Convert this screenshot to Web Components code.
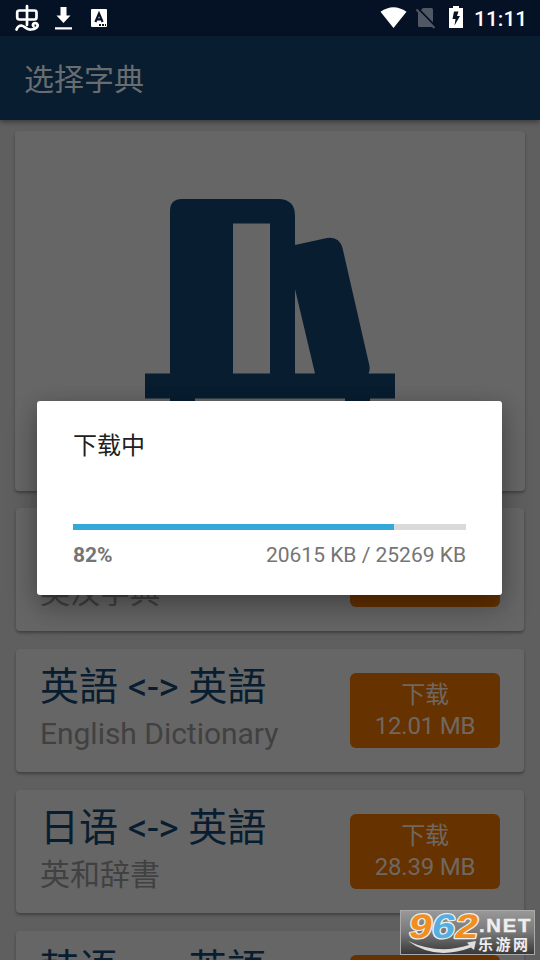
<!DOCTYPE html>
<html lang="zh-CN">
<head>
<meta charset="utf-8">
<title>选择字典</title>
<style>
html,body{margin:0;height:960px;overflow:hidden;background:#5f5f5f}
body{font-family:Roboto,"Noto Sans CJK SC",sans-serif}
</style>
</head>
<body>
<dict-app></dict-app>
<script>
const define = (name, html) => {
  const t = document.createElement('template');
  t.innerHTML = html;
  customElements.define(name, class extends HTMLElement {
    constructor() {
      super();
      this.attachShadow({mode: 'open'}).append(t.content.cloneNode(true));
    }
  });
};

define('status-bar', `
<style>
:host{display:flex;height:36px;box-sizing:border-box;background:#051124;color:#fff;align-items:center;justify-content:space-between;padding:0 13px 0 14px}
.g{display:flex;align-items:center}
svg{display:block}
.t{font-size:21px;line-height:36px;font-weight:500;width:53px;white-space:nowrap;margin-left:10px;padding-top:1px;height:35px}
</style>
<div class="g">
<svg width="110" height="36" viewBox="14 0 110 36">
<g fill="none" stroke="#fff" stroke-width="2.700" stroke-linecap="round" stroke-linejoin="round">
<path d="M27 6V25M19.500 10.500H34.500Q36.500 10.500 36.500 12.500V17Q36.500 19.500 34.500 19.500H19.500Q17.200 19.500 17.200 17V12.500Q17.200 10.500 19.500 10.500Z"/>
<path d="M16.500 29.500Q18 25.500 21.500 25.500C25 26 26 30 31 29.500C36 29.500 39 26 37 23.800C35 22 31.500 24 33.500 26.200"/></g>
<path d="M60.500 7H66.500V15.500H70.500L63.500 23L56.500 15.500H60.500Z M55 27.300H72V29.600H55Z" fill="#fff"/>
<rect x="91" y="9" width="16" height="18" rx="1" fill="#fff"/>
<path d="M95.400 22L99 13.500L102.600 22M96.900 19.300H101.100" fill="none" stroke="#051124" stroke-width="2.200"/>
<path d="M99 24H101V26H99ZM102 24H104V26H102ZM105 24H106V26H105Z" fill="#051124"/>
</svg></div>
<div class="g">
<svg width="84" height="36" viewBox="380 0 84 36">
<path d="M380.500 11.800Q393.500 2.500 406.500 11.800L393.500 28Z" fill="#fff"/>
<path d="M423 8H431.500Q433 8 433 9.500V25.500Q433 27 431.500 27H419.500Q418 27 418 25.500V13Z" fill="#505866"/>
<path d="M418 8.500L436 27" stroke="#051124" stroke-width="2"/>
<path d="M416.500 9.500L434.500 28" stroke="#505866" stroke-width="2"/>
<path d="M453 6H459V8H463V28H449V8H453Z" fill="#fff"/>
<path d="M454 11.500H458.500L457 16H460L454.500 25.500L455.500 19H452.500Z" fill="#051124"/>
</svg>
<div class="t"><slot></slot></div></div>`);

define('app-bar', `
<style>
:host{display:flex;height:84px;box-sizing:border-box;padding:0 0 3px 24px;align-items:center;background:#081d30;color:#696d70;font-size:30px;box-shadow:0 2px 5px rgba(0,0,0,.4);position:relative}
</style><slot></slot>`);

define('hero-card', `
<style>
:host{display:flex;justify-content:center;height:360px;margin:11px 15px 17px;background:#666;border-radius:4px;box-shadow:0 2px 3px rgba(0,0,0,.32)}
svg{display:block}
</style>
<svg width="250" height="360" viewBox="145 131 250 360" fill="#081d30">
<path fill-rule="evenodd" d="M170 373.500V211Q170 199 182 199H278Q295 199 295 216V245L327 238Q339 236 342.500 248L369.500 366Q370.200 370 368.500 373.500H395V398.500H370V424H345V398.500H195V424H170V398.500H145V373.500ZM233 223.500V373.500H270V223.500ZM295 289V373.500H315Z"/>
</svg>`);

define('dict-row', `
<style>
:host{display:flex;box-sizing:border-box;height:123px;margin:0 16px 18px;padding:0 24px;justify-content:space-between;align-items:center;background:#666;border-radius:4px;box-shadow:0 2px 3px rgba(0,0,0,.32)}
.txt{align-self:flex-start;padding-top:11px;white-space:nowrap}
.name{font-size:39px;line-height:55px;height:54px;color:#081d30}
.sub{font-size:30px;line-height:40px;color:#414141;letter-spacing:-.03px}
</style>
<div class="txt"><div class="name"><slot name="name"></slot></div><div class="sub"><slot name="sub"></slot></div></div>
<slot name="action"></slot>`);

define('download-button', `
<style>
:host{display:flex;flex-direction:column;align-items:center;box-sizing:border-box;width:150px;height:75px;padding-top:7px;border-radius:6px;background:#663200;color:#6f6861;font-size:24px;line-height:31px;letter-spacing:-.2px}
</style><slot></slot>`);

define('progress-bar', `
<style>
:host{display:block;height:6px;background:#dadada}
div{height:6px;width:321px;background:#35a8da}
</style><div></div>`);

define('download-dialog', `
<style>
:host{position:absolute;left:37px;top:401px;width:465px;height:194px;box-sizing:border-box;padding:27px 36px 0;background:#fff;border-radius:3px;box-shadow:0 15px 30px rgba(0,0,0,.25),0 3px 18px rgba(0,0,0,.16);color:#757575;font-size:21px}
h2{margin:0;font-size:24px;font-weight:400;line-height:36px;color:#212121}
progress-bar{margin-top:60px}
.row{display:flex;justify-content:space-between;line-height:30px;margin-top:10px}
b{font-weight:700}
</style>
<h2><slot name="title"></slot></h2><progress-bar></progress-bar>
<div class="row"><b><slot name="pct"></slot></b><slot name="size"></slot></div>`);

define('site-badge', `
<style>
:host{position:absolute;left:400px;top:910px;width:135px;height:45px}
svg{display:block}
</style>
<svg width="135" height="45" viewBox="0 0 135 45">
<defs><linearGradient id="g" x2="0" y2="1"><stop stop-color="#999"/><stop offset=".5" stop-color="#777"/><stop offset="1" stop-color="#373737"/></linearGradient></defs>
<rect x=".5" y=".5" width="134" height="44" fill="url(#g)" stroke="#aaa"/>
<g transform="translate(7.500 28) skewX(-10)" font-family="'Liberation Sans'" font-weight="700" font-size="34" stroke="#eee" stroke-width="2.400" paint-order="stroke" stroke-linejoin="round">
<text textLength="69" lengthAdjust="spacingAndGlyphs" fill="#f18e20">9<tspan fill="#55aee0">6</tspan>2</text></g>
<path d="M8 31Q38 45 69 35L67 32.500L76 31L74 40L71 37.500Q35 51 8 31Z" fill="#ddd"/>
<text x="79" y="22" font-family="'Liberation Sans'" font-weight="700" font-size="18" textLength="53" lengthAdjust="spacingAndGlyphs" letter-spacing="1.500" fill="#eee" stroke="#eee" stroke-width=".4">.NET</text>
<text x="78" y="40" font-family="'Noto Sans CJK SC'" font-weight="700" font-size="15" textLength="50" fill="#eee">乐游网</text>
</svg>`);

define('dict-app', `
<style>
:host{display:block;position:relative;width:540px;height:960px;overflow:hidden;background:#5f5f5f}
</style>
<status-bar>11:11</status-bar>
<app-bar>选择字典</app-bar>
<hero-card></hero-card>
<dict-row><span slot="sub">英汉字典</span><download-button slot="action"></download-button></dict-row>
<dict-row><span slot="name">英語 &lt;-&gt; 英語</span><span slot="sub">English Dictionary</span><download-button slot="action"><span>下载</span><span>12.01 MB</span></download-button></dict-row>
<dict-row><span slot="name">日语 &lt;-&gt; 英語</span><span slot="sub">英和辞書</span><download-button slot="action"><span>下载</span><span>28.39 MB</span></download-button></dict-row>
<dict-row><span slot="name">韩语 &lt;-&gt; 英語</span><download-button slot="action"></download-button></dict-row>
<download-dialog><span slot="title">下载中</span><span slot="pct">82%</span><span slot="size">20615 KB / 25269 KB</span></download-dialog>
<site-badge></site-badge>`);
</script>
</body>
</html>
